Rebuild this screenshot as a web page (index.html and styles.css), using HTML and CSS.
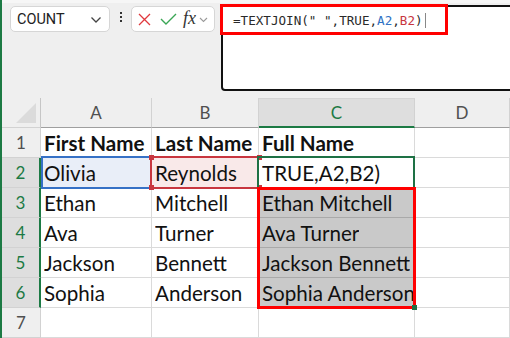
FILE: index.html
```html
<!DOCTYPE html>
<html>
<head>
<meta charset="utf-8">
<link rel="stylesheet" href="styles.css">
</head>
<body>
<div class="app">
  <div class="toolbar">
    <div class="namebox">
      <span class="nb-text">COUNT</span>
      <svg class="chev" width="12" height="8" viewBox="0 0 12 8"><path d="M1.5 1.5 L6 6 L10.5 1.5" fill="none" stroke="#444" stroke-width="1.3"/></svg>
    </div>
    <div class="dots"><i></i><i></i><i></i></div>
    <div class="fxbox">
      <svg class="ico-x" width="13" height="13" viewBox="0 0 13 13"><path d="M1 1 L12 12 M12 1 L1 12" stroke="#e0393e" stroke-width="1.3" fill="none"/></svg>
      <svg class="ico-ok" width="17" height="12" viewBox="0 0 17 12"><path d="M1 6 L6 11 L16 1" stroke="#3aa655" stroke-width="1.4" fill="none"/></svg>
      <span class="fx">fx</span>
      <svg class="chev2" width="9" height="6" viewBox="0 0 9 6"><path d="M1 1 L4.5 4.5 L8 1" fill="none" stroke="#9a9a9a" stroke-width="1.1"/></svg>
    </div>
    <div class="formula">
      <div class="ftext">=TEXTJOIN(" ",TRUE,<span class="ref-a">A2</span>,<span class="ref-b">B2</span>)<span class="caret"></span></div>
      <div class="annot"></div>
    </div>
  </div>
  <div class="sheet">
    <div class="corner"><span class="tri"></span></div>
    <div class="ch">A</div>
    <div class="ch">B</div>
    <div class="ch ch-sel">C</div>
    <div class="ch">D</div>

    <div class="rh">1</div>
    <div class="c bold"><span class="t">First Name</span></div>
    <div class="c bold"><span class="t">Last Name</span></div>
    <div class="c bold"><span class="t">Full Name</span></div>
    <div class="c"></div>

    <div class="rh rh-sel">2</div>
    <div class="c ref-a-bg"><span class="t">Olivia</span><div class="ov ov-a"></div></div>
    <div class="c ref-b-bg"><span class="t">Reynolds</span><div class="ov ov-b"><i class="h h-tl"></i><i class="h h-tr"></i><i class="h h-bl"></i><i class="h h-br"></i></div></div>
    <div class="c"><span class="t">TRUE,A2,B2)</span><div class="ov ov-c"></div></div>
    <div class="c"></div>

    <div class="rh rh-sel">3</div>
    <div class="c"><span class="t">Ethan</span></div>
    <div class="c"><span class="t">Mitchell</span></div>
    <div class="c spill"><span class="t">Ethan Mitchell</span><div class="ov ov-spill"><i class="fill"></i></div></div>
    <div class="c"></div>

    <div class="rh rh-sel">4</div>
    <div class="c"><span class="t">Ava</span></div>
    <div class="c"><span class="t">Turner</span></div>
    <div class="c spill"><span class="t">Ava Turner</span></div>
    <div class="c"></div>

    <div class="rh rh-sel">5</div>
    <div class="c"><span class="t">Jackson</span></div>
    <div class="c"><span class="t">Bennett</span></div>
    <div class="c spill"><span class="t">Jackson Bennett</span></div>
    <div class="c"></div>

    <div class="rh rh-sel">6</div>
    <div class="c"><span class="t">Sophia</span></div>
    <div class="c"><span class="t">Anderson</span></div>
    <div class="c spill"><span class="t">Sophia Anderson</span></div>
    <div class="c"></div>

    <div class="rh">7</div>
    <div class="c"></div>
    <div class="c"></div>
    <div class="c"></div>
    <div class="c"></div>
  </div>
</div>
</body>
</html>
```

FILE: styles.css
```css
* { box-sizing: border-box; }
html, body { margin: 0; padding: 0; }
body {
  width: 510px;
  height: 338px;
  overflow: hidden;
  background: #efefef;
  font-family: "Lato", "Open Sans", sans-serif;
}
.app {
  height: 338px;
  border-left: 2px solid #1c7a44;
  display: flex;
  flex-direction: column;
}
.toolbar {
  height: 98px;
  flex: none;
  display: flex;
  align-items: flex-start;
  background: linear-gradient(#f6f6f6 0 3px, #efefef 3px);
}
.namebox {
  margin: 6px 0 0 8px;
  width: 100px;
  height: 26px;
  background: #fff;
  border: 1px solid #d6d6d6;
  border-radius: 5px;
  display: flex;
  align-items: center;
  justify-content: space-between;
  padding: 0 7px 0 6px;
}
.nb-text {
  font-family: "Roboto", sans-serif;
  font-size: 14.5px;
  color: #222;
}
.chev { margin-top: 1px; }
.dots {
  margin: 12px 0 0 10px;
  width: 2px;
  display: flex;
  flex-direction: column;
  gap: 2px;
}
.dots i {
  display: block;
  width: 2px;
  height: 2px;
  background: #333;
}
.fxbox {
  margin: 6px 0 0 9px;
  width: 84px;
  height: 26px;
  background: #fff;
  border: 1px solid #d6d6d6;
  border-radius: 5px;
  display: flex;
  align-items: center;
  padding-left: 6px;
}
.ico-x { margin-right: 9px; }
.ico-ok { margin-right: 6px; }
.fx {
  font-family: "Liberation Serif", serif;
  font-style: italic;
  font-size: 18px;
  color: #333;
  margin-top: -2px;
  margin-right: 3px;
}
.chev2 { margin-top: 2px; }
.formula {
  position: relative;
  margin: 5px -20px 0 6px;
  flex: 1;
  height: 86px;
  background: #fff;
  border: 2px solid #111;
  border-radius: 0 0 0 4px;
  padding: 6px 0 0 10px;
}
.ftext {
  font-family: "DejaVu Sans Mono", monospace;
  font-size: 12.6px;
  color: #2a2a2a;
  white-space: nowrap;
  line-height: 16px;
}
.ref-a { color: #2f72c4; }
.ref-b { color: #c8363f; }
.caret {
  display: inline-block;
  width: 1px;
  height: 15px;
  background: #888;
  margin-left: 2px;
  vertical-align: -3px;
}
.annot {
  position: absolute;
  left: -3px;
  top: -3px;
  width: 228px;
  height: 31px;
  border: 3px solid #ff0000;
}
.sheet {
  flex: none;
  display: grid;
  grid-template-columns: 39px 111px 107px 156px 1fr;
  grid-template-rows: repeat(8, 30px);
  background: #fff;
}
.corner, .ch, .rh {
  background: #efefef;
  border-right: 1px solid #d2d2d2;
  border-bottom: 1px solid #d2d2d2;
  color: #505050;
  display: flex;
  align-items: center;
  justify-content: center;
  font-size: 17px;
}
.corner { position: relative; border-right-color: #c6c6c6; }
.tri {
  position: absolute;
  right: 4px;
  bottom: 4px;
  width: 0;
  height: 0;
  border-left: 20px solid transparent;
  border-bottom: 20px solid #dbdbdb;
}
.ch { border-bottom-color: #9f9f9f; }
.ch-sel {
  background: #dedede;
  color: #1c7a44;
  border-top: 1px solid #d4d4d4;
  border-bottom: 2px solid #1c7a44;
}
.rh-sel {
  background: #dedede;
  color: #1c7a44;
  border-right: 2px solid #1c7a44;
}
.c {
  position: relative;
  border-right: 1px solid #dadada;
  border-bottom: 1px solid #dadada;
  font-size: 20.6px;
  color: #111;
  display: flex;
  align-items: center;
  padding: 1px 0 0 3px;
  min-width: 0;
}
.t {
  white-space: nowrap;
  overflow: hidden;
  display: block;
  max-width: 100%;
}
.bold { font-weight: 700; }
.ref-a-bg { background: #e9eef8; }
.ref-b-bg { background: #f9e9e9; }
.spill { background: #c9c9c9; border-bottom-color: #a9a9a9; }
.ov {
  position: absolute;
  pointer-events: none;
  z-index: 2;
}
.ov-a {
  left: 0; right: -1px; top: -2px; bottom: -2px;
  border-top: 2px solid #3671c6;
  border-bottom: 2px solid #3671c6;
  border-left: 2px solid #3671c6;
}
.ov-b {
  left: -2px; right: -1px; top: -2px; bottom: -2px;
  border: 2px solid #c8363f;
  border-right: 0;
}
.h {
  position: absolute;
  width: 5px;
  height: 5px;
  background: #c8363f;
}
.h-tl { left: -3px; top: -3px; }
.h-bl { left: -3px; bottom: -3px; }
.h-tr { right: -3px; top: -3px; }
.h-br { right: -3px; bottom: -3px; }
.ov-c {
  left: -2px; right: -1px; top: -2px; bottom: -2px;
  border: 2px solid #1e7145;
}
.ov-spill {
  left: -2px; right: -2px; top: -1px;
  height: 122px;
  border: 3px solid #ff0000;
  z-index: 3;
}
.fill {
  position: absolute;
  right: -4px;
  bottom: -4px;
  width: 5px;
  height: 5px;
  background: #1e7145;
}
```
